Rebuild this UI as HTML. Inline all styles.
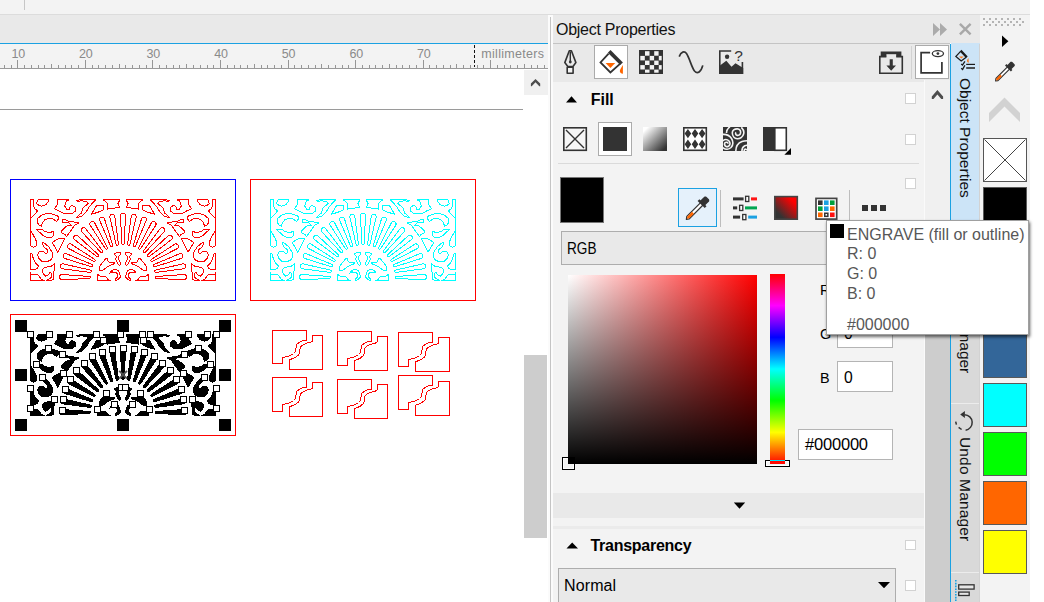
<!DOCTYPE html>
<html><head><meta charset="utf-8"><title>Object Properties</title>
<style>
html,body{margin:0;padding:0;background:#fff;}
body{width:1044px;height:602px;overflow:hidden;position:relative;font-family:"Liberation Sans",sans-serif;color:#000;}
.a{position:absolute;}
.t{position:absolute;white-space:nowrap;line-height:1;}
svg{position:absolute;left:0;top:0;overflow:visible;}
.cb{position:absolute;width:8.6px;height:8.6px;background:#fff;border:1px solid #d2d2d2;}
.inp{position:absolute;background:#fff;border:1px solid #b4b4b4;box-sizing:border-box;}
.sw{position:absolute;left:983px;width:44px;height:44px;box-sizing:border-box;border:1px solid #595959;}
</style></head><body>

<div class="a" style="left:0;top:0;width:1030px;height:14px;background:#f3f3f3;border-bottom:1px solid #dcdcdc"></div>
<div class="a" style="left:24px;top:0;width:1px;height:10px;background:#c6c6c6"></div>
<div class="a" style="left:0;top:15px;width:548px;height:28px;background:#e9e9e9"></div>
<div class="a" style="left:0;top:43px;width:548px;height:1px;background:#1ba1e2"></div>
<div class="a" style="left:0;top:44px;width:548px;height:24px;background:#f3f3f3"></div>
<div class="a" style="left:0;top:68px;width:548px;height:1px;background:#9a9a9a"></div>
<div class="a" style="left:0;top:109px;width:523px;height:1px;background:#9a9a9a"></div>
<div class="a" style="left:524px;top:70px;width:24px;height:25px;background:#f0f0f0"></div>
<div class="a" style="left:524px;top:355px;width:23px;height:183px;background:#cdcdcd"></div>
<div class="a" style="left:548px;top:15px;width:5px;height:587px;background:#fbfbfb"></div>
<div class="a" style="left:550px;top:17px;width:1px;height:585px;background:#c4c4c4"></div>
<div class="a" style="left:553px;top:15px;width:427px;height:28px;background:#e9e9e9"></div>
<div class="a" style="left:553px;top:43px;width:397px;height:1px;background:#c4c4c4"></div>
<div class="a" style="left:553px;top:44px;width:397px;height:39px;background:#e9e9e9"></div>
<div class="a" style="left:553px;top:82px;width:371px;height:520px;background:#f3f3f3"></div>
<div class="a" style="left:924px;top:80px;width:26px;height:522px;background:#f0f0f0;border-left:1px solid #fafafa;box-sizing:border-box"></div>
<div class="a" style="left:925px;top:222px;width:25px;height:380px;background:#cdcdcd"></div>
<div class="a" style="left:951px;top:44px;width:29px;height:558px;background:#d9d9d9"></div>
<div class="a" style="left:951px;top:43px;width:29px;height:181px;background:#cce4f7"></div>
<div class="a" style="left:950px;top:44px;width:1px;height:558px;background:#1ba1e2"></div>
<div class="a" style="left:951px;top:403px;width:28px;height:1px;background:#ececec"></div>
<div class="a" style="left:951px;top:572px;width:28px;height:1px;background:#ececec"></div>
<div class="a" style="left:979px;top:44px;width:1px;height:558px;background:#d2d2d2"></div>
<div class="a" style="left:980px;top:15px;width:50px;height:587px;background:#f3f3f3"></div>
<div class="t" style="left:11.4px;top:48px;font-size:12.5px;color:#8a8a8a;letter-spacing:-0.2px">10</div>
<div class="t" style="left:79.0px;top:48px;font-size:12.5px;color:#8a8a8a;letter-spacing:-0.2px">20</div>
<div class="t" style="left:146.6px;top:48px;font-size:12.5px;color:#8a8a8a;letter-spacing:-0.2px">30</div>
<div class="t" style="left:214.2px;top:48px;font-size:12.5px;color:#8a8a8a;letter-spacing:-0.2px">40</div>
<div class="t" style="left:281.8px;top:48px;font-size:12.5px;color:#8a8a8a;letter-spacing:-0.2px">50</div>
<div class="t" style="left:349.4px;top:48px;font-size:12.5px;color:#8a8a8a;letter-spacing:-0.2px">60</div>
<div class="t" style="left:417.0px;top:48px;font-size:12.5px;color:#8a8a8a;letter-spacing:-0.2px">70</div>
<div class="t" style="left:481.3px;top:48px;font-size:12.5px;letter-spacing:0.3px;color:#8a8a8a">millimeters</div>
<div class="t" id="ttl" style="left:556px;top:21.5px;font-size:16px;letter-spacing:-0.26px;color:#111">Object Properties</div>
<div class="t" id="fill" style="left:590.7px;top:92px;font-size:16px;font-weight:bold">Fill</div>
<div class="t" id="transp" style="left:590.5px;top:538.4px;font-size:16px;letter-spacing:-0.27px;font-weight:bold">Transparency</div>
<div class="inp" style="left:561px;top:231px;width:340px;height:34px;background:#e9e9e9;border-color:#adadad"></div>
<div class="t" id="rgb" style="left:567px;top:241px;font-size:16px;transform:scaleX(.85);transform-origin:0 0">RGB</div>
<div class="inp" style="left:837px;top:273px;width:56px;height:31px"></div>
<div class="t" style="left:820px;top:281.8px;font-size:15.5px;transform:scaleX(.93);transform-origin:0 0">R</div>
<div class="t" style="left:843.8px;top:281px;font-size:16.5px;transform:scaleX(.95);transform-origin:0 0">0</div>
<div class="inp" style="left:837px;top:317px;width:56px;height:31px"></div>
<div class="t" style="left:820px;top:325.8px;font-size:15.5px;transform:scaleX(.93);transform-origin:0 0">G</div>
<div class="t" style="left:843.8px;top:325px;font-size:16.5px;transform:scaleX(.95);transform-origin:0 0">0</div>
<div class="inp" style="left:837px;top:361px;width:56px;height:31px"></div>
<div class="t" style="left:820px;top:369.8px;font-size:15.5px;transform:scaleX(.93);transform-origin:0 0">B</div>
<div class="t" style="left:843.8px;top:369px;font-size:16.5px;transform:scaleX(.95);transform-origin:0 0">0</div>
<div class="inp" style="left:798px;top:429px;width:95px;height:31px"></div>
<div class="t" id="hex" style="left:805px;top:436.3px;font-size:16.5px;letter-spacing:-0.2px">#000000</div>
<div class="a" style="left:553px;top:493px;width:371px;height:25px;background:#e9e9e9"></div>
<div class="a" style="left:553px;top:526px;width:371px;height:3px;background:#ebebeb"></div>
<div class="inp" style="left:558px;top:568px;width:338px;height:40px;background:#e9e9e9;border-color:#adadad"></div>
<div class="t" id="normal" style="left:564px;top:578px;font-size:16px;letter-spacing:0.12px">Normal</div>
<div class="a" style="left:558px;top:163px;width:361px;height:1px;background:#dadada"></div>
<div class="a" style="left:911px;top:46px;width:1px;height:33px;background:#d2d2d2"></div>
<div class="a" style="left:720px;top:190px;width:1px;height:37px;background:#bdbdbd"></div>
<div class="a" style="left:849px;top:190px;width:1px;height:37px;background:#bdbdbd"></div>
<div class="cb" style="left:905.2px;top:93.2px"></div>
<div class="cb" style="left:905.2px;top:134.4px"></div>
<div class="cb" style="left:905.2px;top:178.4px"></div>
<div class="cb" style="left:905.2px;top:539.8px"></div>
<div class="cb" style="left:905.2px;top:580.2px"></div>
<div class="a" style="left:594px;top:45px;width:32px;height:32px;background:#fff;border:1px solid #ababab"></div>
<div class="a" style="left:915px;top:45px;width:32px;height:32px;background:#fff;border:1px solid #ababab"></div>
<div class="a" style="left:598px;top:122px;width:32px;height:32px;background:#fff;border:1px solid #ababab"></div>
<div class="a" style="left:678px;top:188px;width:37px;height:37px;background:#e5f1fb;border:1px solid #1ba1e2"></div>
<div class="a" style="left:560px;top:177px;width:42px;height:44px;background:#000;border:1px solid #777"></div>
<div class="a" style="left:568px;top:275px;width:189px;height:189px;background:linear-gradient(to bottom,rgba(0,0,0,0),#000),linear-gradient(to right,#fff,#f00)"></div>
<div class="a" style="left:770px;top:274px;width:15px;height:190px;background:linear-gradient(to bottom,#f00 0%,#f0f 16.67%,#00f 33.33%,#0ff 50%,#0f0 66.67%,#ff0 83.33%,#f00 100%)"></div>
<div class="a" style="left:562px;top:457px;width:11px;height:11px;border:1px solid #000;box-shadow:inset 0 0 0 1px #fff"></div>
<div class="a" style="left:765px;top:460px;width:23px;height:5px;border:1px solid #000;box-shadow:inset 0 0 0 1px #fff"></div>
<div class="a" style="left:770px;top:460px;width:15px;height:1px;background:#00e5ff"></div>
<div class="a" style="left:770px;top:461px;width:15px;height:3px;background:#ff0800"></div>
<div class="a" style="left:568px;top:458.4px;width:5.6px;height:5.6px;background:#000"></div>
<div class="t" id="vt1" style="left:972.5px;top:78px;font-size:15.5px;transform-origin:0 0;transform:rotate(90deg);color:#111">Object Properties</div>
<div class="t" id="vt2" style="left:972.5px;top:263px;font-size:15.5px;transform-origin:0 0;transform:rotate(90deg);color:#111">Object Manager</div>
<div class="t" id="vt3" style="left:972.5px;top:437px;font-size:15.5px;letter-spacing:0.15px;transform-origin:0 0;transform:rotate(90deg);color:#111">Undo Manager</div>
<div class="sw" style="top:138px;background:#fff;border-color:#555"></div>
<div class="sw" style="top:187px;background:#000"></div>
<div class="sw" style="top:236px;background:#f00"></div>
<div class="sw" style="top:285px;background:#00f"></div>
<div class="sw" style="top:334px;background:#336699"></div>
<div class="sw" style="top:383px;background:#00ffff"></div>
<div class="sw" style="top:432px;background:#00ff00"></div>
<div class="sw" style="top:481px;background:#ff6600"></div>
<div class="sw" style="top:530px;background:#ffff00"></div><svg width="1044" height="602" viewBox="0 0 1044 602">
<g shape-rendering="crispEdges" stroke="#969696" stroke-width="1" fill="none">
<path d="M4.5,65 V68 M11.5,65 V68 M17.5,60 V68 M24.5,65 V68 M31.5,65 V68 M38.5,65 V68 M44.5,65 V68 M51.5,64 V68 M58.5,65 V68 M65.5,65 V68 M71.5,65 V68 M78.5,65 V68 M85.5,60 V68 M92.5,65 V68 M98.5,65 V68 M105.5,65 V68 M112.5,65 V68 M119.5,64 V68 M125.5,65 V68 M132.5,65 V68 M139.5,65 V68 M146.5,65 V68 M152.5,60 V68 M159.5,65 V68 M166.5,65 V68 M173.5,65 V68 M179.5,65 V68 M186.5,64 V68 M193.5,65 V68 M200.5,65 V68 M207.5,65 V68 M213.5,65 V68 M220.5,60 V68 M227.5,65 V68 M234.5,65 V68 M240.5,65 V68 M247.5,65 V68 M254.5,64 V68 M261.5,65 V68 M267.5,65 V68 M274.5,65 V68 M281.5,65 V68 M288.5,60 V68 M294.5,65 V68 M301.5,65 V68 M308.5,65 V68 M315.5,65 V68 M321.5,64 V68 M328.5,65 V68 M335.5,65 V68 M342.5,65 V68 M348.5,65 V68 M355.5,60 V68 M362.5,65 V68 M369.5,65 V68 M375.5,65 V68 M382.5,65 V68 M389.5,64 V68 M396.5,65 V68 M402.5,65 V68 M409.5,65 V68 M416.5,65 V68 M423.5,60 V68 M429.5,65 V68 M436.5,65 V68 M443.5,65 V68 M450.5,65 V68 M456.5,64 V68 M463.5,65 V68 M470.5,65 V68 M477.5,65 V68 M483.5,65 V68 M490.5,60 V68 M497.5,65 V68 M504.5,65 V68 M510.5,65 V68 M517.5,65 V68 M524.5,64 V68 M531.5,65 V68 M537.5,65 V68 M544.5,65 V68"/>
</g>
<path d="M474.5,45 V67" stroke="#111" stroke-width="1" stroke-dasharray="3,2" shape-rendering="crispEdges"/>
<g shape-rendering="crispEdges" fill="none" stroke-width="1">
<rect x="10.5" y="179.5" width="225" height="121" stroke="#0000ff"/>
<rect x="250.5" y="179.5" width="225" height="121" stroke="#ff0000"/>
<rect x="10.5" y="314.5" width="225" height="121" stroke="#ff0000"/>
<g stroke="#ff0000"><path d="M30.5,199.5 33.1,199.5 33.2,205.0 34.7,208.7 37.6,211.0 34.0,215.0 30.7,218.5 30.7,230.4 33.0,234.5 35.5,239.3 36.6,242.0 36.6,245.5 33.2,247.3 30.5,245.5Z M48.8,199.5 48.2,201.6 46.2,204.2 44.6,205.6 41.2,206.2 38.6,205.2 36.8,203.6 37.3,200.9 38.6,199.5Z M68.7,199.5 68.7,200.2 66.5,200.9 64.6,205.7 66.9,209.8 69.0,209.8 69.5,207.2 72.1,205.3 75.5,207.2 75.8,210.6 72.8,213.2 63.9,213.3 59.4,211.0 54.2,208.7 56.8,205.7 57.9,203.5 57.9,199.5Z M48.2,213.3 53.4,214.3 57.9,216.2 58.6,218.4 56.8,221.4 52.7,218.8 48.9,218.3 45.2,219.5 42.6,222.2 41.5,226.3 39.2,225.5 37.3,222.2 37.7,218.4 42.2,214.7Z M36.2,229.3 42.2,229.3 44.4,231.1 48.2,232.6 51.2,232.2 51.9,231.1 53.8,231.1 53.8,234.9 51.9,237.1 45.9,237.1 42.2,234.9 39.2,231.9Z M62.4,219.5 64.6,219.2 69.9,221.8 78.2,222.2 78.6,223.3 74.3,225.5 72.1,228.9 66.5,236.4 65.4,234.9 61.3,232.6 61.3,231.1 66.9,225.9 71.3,225.5 68.4,222.5 62.4,222.5Z M95.8,199.5 89.4,206.5 86.8,210.9 82.0,216.2 76.4,217.7 78.2,215.8 81.2,213.2 83.1,208.0 87.2,204.2 88.3,203.1 86.5,201.2 80.5,200.9 78.2,201.6 76.0,200.1Z M102.9,205.3 103.6,207.2 103.3,209.8 98.4,212.1 91.3,214.3 93.6,210.6 95.4,207.2 96.9,205.3Z M119.7,199.5 119.7,200.5 117.8,203.1 119.0,205.7 119.7,207.6 114.9,208.0 108.9,208.3 107.4,209.8 107.2,203.5 105.1,201.2 103.3,200.1 104.4,199.5Z M30.5,253.3 32.1,254.1 33.6,259.7 36.2,263.8 38.5,266.0 37.0,268.6 34.7,269.8 30.5,269.4Z M42.2,242.1 44.1,242.9 48.9,247.0 51.9,251.8 52.7,256.7 50.4,260.4 45.9,261.8 41.8,261.2 39.2,258.9 37.3,254.8 39.2,251.8 42.9,251.1 44.8,252.9 46.7,253.3 47.8,251.5 46.7,248.8 44.1,247.3 42.6,244.4Z M63.1,238.0 64.6,239.1 61.6,244.7 57.9,252.2 56.8,250.3 52.3,242.5 58.6,238.4Z M54.2,264.2 53.8,278.7 51.9,280.2 46.3,280.2 49.7,278.7 51.5,276.9 51.2,273.1 50.0,272.4 48.2,275.0 45.6,276.1 43.3,273.9 42.2,270.9 43.3,268.3 45.9,267.1 50.4,266.8 53.0,264.9Z M30.5,273.1 31.4,274.2 33.2,275.0 34.7,274.5 37.7,274.5 41.5,279.5 44.8,280.5 30.5,280.5Z M106.3,258.2 107.8,259.3 108.1,261.2 109.6,262.3 114.1,262.3 114.1,263.8 111.9,264.5 108.1,266.4 105.1,268.6 101.8,270.5 99.5,270.1 99.2,267.5 101.4,263.8 103.6,261.2Z M120.8,252.2 120.5,254.1 118.6,256.7 118.6,259.7 120.1,261.9 120.1,264.9 119.0,265.3 116.7,261.9 115.6,259.3 116.3,256.7 115.2,255.2 114.5,253.7 117.8,252.2Z M114.5,269.4 117.8,270.1 119.7,272.8 120.1,276.1 120.5,277.2 117.8,279.9 115.6,280.2 115.6,279.1 117.5,276.9 117.5,273.9 116.0,272.4 112.6,272.0 110.4,272.8 111.5,270.5Z M97.3,274.2 98.4,275.0 100.3,276.1 105.5,276.1 107.8,279.5 109.6,280.5 97.3,280.5Z"/><path transform="translate(246,0) scale(-1,1)" d="M30.5,199.5 33.1,199.5 33.2,205.0 34.7,208.7 37.6,211.0 34.0,215.0 30.7,218.5 30.7,230.4 33.0,234.5 35.5,239.3 36.6,242.0 36.6,245.5 33.2,247.3 30.5,245.5Z M48.8,199.5 48.2,201.6 46.2,204.2 44.6,205.6 41.2,206.2 38.6,205.2 36.8,203.6 37.3,200.9 38.6,199.5Z M68.7,199.5 68.7,200.2 66.5,200.9 64.6,205.7 66.9,209.8 69.0,209.8 69.5,207.2 72.1,205.3 75.5,207.2 75.8,210.6 72.8,213.2 63.9,213.3 59.4,211.0 54.2,208.7 56.8,205.7 57.9,203.5 57.9,199.5Z M48.2,213.3 53.4,214.3 57.9,216.2 58.6,218.4 56.8,221.4 52.7,218.8 48.9,218.3 45.2,219.5 42.6,222.2 41.5,226.3 39.2,225.5 37.3,222.2 37.7,218.4 42.2,214.7Z M36.2,229.3 42.2,229.3 44.4,231.1 48.2,232.6 51.2,232.2 51.9,231.1 53.8,231.1 53.8,234.9 51.9,237.1 45.9,237.1 42.2,234.9 39.2,231.9Z M62.4,219.5 64.6,219.2 69.9,221.8 78.2,222.2 78.6,223.3 74.3,225.5 72.1,228.9 66.5,236.4 65.4,234.9 61.3,232.6 61.3,231.1 66.9,225.9 71.3,225.5 68.4,222.5 62.4,222.5Z M95.8,199.5 89.4,206.5 86.8,210.9 82.0,216.2 76.4,217.7 78.2,215.8 81.2,213.2 83.1,208.0 87.2,204.2 88.3,203.1 86.5,201.2 80.5,200.9 78.2,201.6 76.0,200.1Z M102.9,205.3 103.6,207.2 103.3,209.8 98.4,212.1 91.3,214.3 93.6,210.6 95.4,207.2 96.9,205.3Z M119.7,199.5 119.7,200.5 117.8,203.1 119.0,205.7 119.7,207.6 114.9,208.0 108.9,208.3 107.4,209.8 107.2,203.5 105.1,201.2 103.3,200.1 104.4,199.5Z M30.5,253.3 32.1,254.1 33.6,259.7 36.2,263.8 38.5,266.0 37.0,268.6 34.7,269.8 30.5,269.4Z M42.2,242.1 44.1,242.9 48.9,247.0 51.9,251.8 52.7,256.7 50.4,260.4 45.9,261.8 41.8,261.2 39.2,258.9 37.3,254.8 39.2,251.8 42.9,251.1 44.8,252.9 46.7,253.3 47.8,251.5 46.7,248.8 44.1,247.3 42.6,244.4Z M63.1,238.0 64.6,239.1 61.6,244.7 57.9,252.2 56.8,250.3 52.3,242.5 58.6,238.4Z M54.2,264.2 53.8,278.7 51.9,280.2 46.3,280.2 49.7,278.7 51.5,276.9 51.2,273.1 50.0,272.4 48.2,275.0 45.6,276.1 43.3,273.9 42.2,270.9 43.3,268.3 45.9,267.1 50.4,266.8 53.0,264.9Z M30.5,273.1 31.4,274.2 33.2,275.0 34.7,274.5 37.7,274.5 41.5,279.5 44.8,280.5 30.5,280.5Z M106.3,258.2 107.8,259.3 108.1,261.2 109.6,262.3 114.1,262.3 114.1,263.8 111.9,264.5 108.1,266.4 105.1,268.6 101.8,270.5 99.5,270.1 99.2,267.5 101.4,263.8 103.6,261.2Z M120.8,252.2 120.5,254.1 118.6,256.7 118.6,259.7 120.1,261.9 120.1,264.9 119.0,265.3 116.7,261.9 115.6,259.3 116.3,256.7 115.2,255.2 114.5,253.7 117.8,252.2Z M114.5,269.4 117.8,270.1 119.7,272.8 120.1,276.1 120.5,277.2 117.8,279.9 115.6,280.2 115.6,279.1 117.5,276.9 117.5,273.9 116.0,272.4 112.6,272.0 110.4,272.8 111.5,270.5Z M97.3,274.2 98.4,275.0 100.3,276.1 105.5,276.1 107.8,279.5 109.6,280.5 97.3,280.5Z"/><path d="M61.8,274.5 60.4,275.0 59.6,276.0 59.4,277.0 59.7,278.4 60.8,279.3 62.0,279.5 72.0,279.4 90.0,278.3 90.8,277.4 90.0,276.5Z M63.2,263.9 62.2,263.9 61.3,264.3 60.6,265.0 60.3,265.9 60.3,266.9 60.7,267.8 61.4,268.5 62.3,268.8 90.2,272.4 91.1,271.8 91.3,270.9 90.6,270.1Z M66.3,253.7 65.4,253.6 64.4,253.8 63.6,254.4 63.1,255.2 63.0,256.2 63.2,257.1 63.8,257.9 64.6,258.4 91.5,266.8 92.5,266.4 92.8,265.5 92.3,264.6Z M71.2,244.2 70.3,243.9 69.4,244.0 68.5,244.4 67.8,245.2 67.5,246.1 67.6,247.0 68.0,247.9 68.7,248.6 93.8,261.4 94.8,261.2 95.3,260.5 94.9,259.5Z M77.7,235.7 76.9,235.3 75.9,235.2 75.0,235.4 74.2,236.1 73.7,236.9 73.6,237.9 73.9,238.8 74.5,239.6 96.9,256.6 98.0,256.6 98.6,255.9 98.4,254.8Z M85.6,228.5 84.8,227.9 83.9,227.6 82.9,227.7 82.1,228.2 81.4,229.0 81.2,229.9 81.3,230.9 81.7,231.7 100.8,252.4 101.9,252.6 102.6,252.0 102.6,250.9Z M94.6,222.7 93.9,222.0 93.0,221.6 92.1,221.5 91.1,221.8 90.4,222.5 90.0,223.4 89.9,224.3 90.2,225.2 105.5,248.9 106.5,249.3 107.2,248.8 107.4,247.8Z M104.4,218.6 103.9,217.8 103.1,217.2 102.2,217.0 101.2,217.1 100.4,217.6 99.8,218.4 99.6,219.4 99.7,220.3 110.6,246.3 111.5,246.8 112.4,246.5 112.8,245.5Z M114.8,216.3 114.5,215.4 113.8,214.7 112.9,214.3 111.9,214.3 111.0,214.6 110.3,215.3 109.9,216.2 109.9,217.2 116.1,244.6 116.9,245.3 117.8,245.1 118.4,244.2Z M125.5,215.8 125.3,214.8 124.8,214.0 124.0,213.5 123.0,213.3 122.0,213.5 121.2,214.0 120.7,214.8 120.5,215.8 121.8,243.9 122.5,244.7 123.5,244.7 124.2,243.9Z M136.1,217.2 136.1,216.2 135.7,215.3 135.0,214.6 134.1,214.3 133.1,214.3 132.2,214.7 131.5,215.4 131.2,216.3 127.6,244.2 128.2,245.1 129.1,245.3 129.9,244.6Z M146.3,220.3 146.4,219.4 146.2,218.4 145.6,217.6 144.8,217.1 143.8,217.0 142.9,217.2 142.1,217.8 141.6,218.6 133.2,245.5 133.6,246.5 134.5,246.8 135.4,246.3Z M155.8,225.2 156.1,224.3 156.0,223.4 155.6,222.5 154.8,221.8 153.9,221.5 153.0,221.6 152.1,222.0 151.4,222.7 138.6,247.8 138.8,248.8 139.5,249.3 140.5,248.9Z M164.3,231.7 164.7,230.9 164.8,229.9 164.6,229.0 163.9,228.2 163.1,227.7 162.1,227.6 161.2,227.9 160.4,228.5 143.4,250.9 143.4,252.0 144.1,252.6 145.2,252.4Z M171.5,239.6 172.1,238.8 172.4,237.9 172.3,236.9 171.8,236.1 171.0,235.4 170.1,235.2 169.1,235.3 168.3,235.7 147.6,254.8 147.4,255.9 148.0,256.6 149.1,256.6Z M177.3,248.6 178.0,247.9 178.4,247.0 178.5,246.1 178.2,245.2 177.5,244.4 176.6,244.0 175.7,243.9 174.8,244.2 151.1,259.5 150.7,260.5 151.2,261.2 152.2,261.4Z M181.4,258.4 182.2,257.9 182.8,257.1 183.0,256.2 182.9,255.2 182.4,254.4 181.6,253.8 180.6,253.6 179.7,253.7 153.7,264.6 153.2,265.5 153.5,266.4 154.5,266.8Z M183.7,268.8 184.6,268.5 185.3,267.8 185.7,266.9 185.7,265.9 185.4,265.0 184.7,264.3 183.8,263.9 182.8,263.9 155.4,270.1 154.7,270.9 154.9,271.8 155.8,272.4Z M184.2,274.5 185.6,275.0 186.4,276.0 186.6,277.0 186.3,278.4 185.2,279.3 184.0,279.5 174.0,279.4 156.0,278.3 155.2,277.4 156.0,276.5Z"/></g>
<g stroke="#00ffff" transform="translate(240,0)"><path d="M30.5,199.5 33.1,199.5 33.2,205.0 34.7,208.7 37.6,211.0 34.0,215.0 30.7,218.5 30.7,230.4 33.0,234.5 35.5,239.3 36.6,242.0 36.6,245.5 33.2,247.3 30.5,245.5Z M48.8,199.5 48.2,201.6 46.2,204.2 44.6,205.6 41.2,206.2 38.6,205.2 36.8,203.6 37.3,200.9 38.6,199.5Z M68.7,199.5 68.7,200.2 66.5,200.9 64.6,205.7 66.9,209.8 69.0,209.8 69.5,207.2 72.1,205.3 75.5,207.2 75.8,210.6 72.8,213.2 63.9,213.3 59.4,211.0 54.2,208.7 56.8,205.7 57.9,203.5 57.9,199.5Z M48.2,213.3 53.4,214.3 57.9,216.2 58.6,218.4 56.8,221.4 52.7,218.8 48.9,218.3 45.2,219.5 42.6,222.2 41.5,226.3 39.2,225.5 37.3,222.2 37.7,218.4 42.2,214.7Z M36.2,229.3 42.2,229.3 44.4,231.1 48.2,232.6 51.2,232.2 51.9,231.1 53.8,231.1 53.8,234.9 51.9,237.1 45.9,237.1 42.2,234.9 39.2,231.9Z M62.4,219.5 64.6,219.2 69.9,221.8 78.2,222.2 78.6,223.3 74.3,225.5 72.1,228.9 66.5,236.4 65.4,234.9 61.3,232.6 61.3,231.1 66.9,225.9 71.3,225.5 68.4,222.5 62.4,222.5Z M95.8,199.5 89.4,206.5 86.8,210.9 82.0,216.2 76.4,217.7 78.2,215.8 81.2,213.2 83.1,208.0 87.2,204.2 88.3,203.1 86.5,201.2 80.5,200.9 78.2,201.6 76.0,200.1Z M102.9,205.3 103.6,207.2 103.3,209.8 98.4,212.1 91.3,214.3 93.6,210.6 95.4,207.2 96.9,205.3Z M119.7,199.5 119.7,200.5 117.8,203.1 119.0,205.7 119.7,207.6 114.9,208.0 108.9,208.3 107.4,209.8 107.2,203.5 105.1,201.2 103.3,200.1 104.4,199.5Z M30.5,253.3 32.1,254.1 33.6,259.7 36.2,263.8 38.5,266.0 37.0,268.6 34.7,269.8 30.5,269.4Z M42.2,242.1 44.1,242.9 48.9,247.0 51.9,251.8 52.7,256.7 50.4,260.4 45.9,261.8 41.8,261.2 39.2,258.9 37.3,254.8 39.2,251.8 42.9,251.1 44.8,252.9 46.7,253.3 47.8,251.5 46.7,248.8 44.1,247.3 42.6,244.4Z M63.1,238.0 64.6,239.1 61.6,244.7 57.9,252.2 56.8,250.3 52.3,242.5 58.6,238.4Z M54.2,264.2 53.8,278.7 51.9,280.2 46.3,280.2 49.7,278.7 51.5,276.9 51.2,273.1 50.0,272.4 48.2,275.0 45.6,276.1 43.3,273.9 42.2,270.9 43.3,268.3 45.9,267.1 50.4,266.8 53.0,264.9Z M30.5,273.1 31.4,274.2 33.2,275.0 34.7,274.5 37.7,274.5 41.5,279.5 44.8,280.5 30.5,280.5Z M106.3,258.2 107.8,259.3 108.1,261.2 109.6,262.3 114.1,262.3 114.1,263.8 111.9,264.5 108.1,266.4 105.1,268.6 101.8,270.5 99.5,270.1 99.2,267.5 101.4,263.8 103.6,261.2Z M120.8,252.2 120.5,254.1 118.6,256.7 118.6,259.7 120.1,261.9 120.1,264.9 119.0,265.3 116.7,261.9 115.6,259.3 116.3,256.7 115.2,255.2 114.5,253.7 117.8,252.2Z M114.5,269.4 117.8,270.1 119.7,272.8 120.1,276.1 120.5,277.2 117.8,279.9 115.6,280.2 115.6,279.1 117.5,276.9 117.5,273.9 116.0,272.4 112.6,272.0 110.4,272.8 111.5,270.5Z M97.3,274.2 98.4,275.0 100.3,276.1 105.5,276.1 107.8,279.5 109.6,280.5 97.3,280.5Z"/><path transform="translate(246,0) scale(-1,1)" d="M30.5,199.5 33.1,199.5 33.2,205.0 34.7,208.7 37.6,211.0 34.0,215.0 30.7,218.5 30.7,230.4 33.0,234.5 35.5,239.3 36.6,242.0 36.6,245.5 33.2,247.3 30.5,245.5Z M48.8,199.5 48.2,201.6 46.2,204.2 44.6,205.6 41.2,206.2 38.6,205.2 36.8,203.6 37.3,200.9 38.6,199.5Z M68.7,199.5 68.7,200.2 66.5,200.9 64.6,205.7 66.9,209.8 69.0,209.8 69.5,207.2 72.1,205.3 75.5,207.2 75.8,210.6 72.8,213.2 63.9,213.3 59.4,211.0 54.2,208.7 56.8,205.7 57.9,203.5 57.9,199.5Z M48.2,213.3 53.4,214.3 57.9,216.2 58.6,218.4 56.8,221.4 52.7,218.8 48.9,218.3 45.2,219.5 42.6,222.2 41.5,226.3 39.2,225.5 37.3,222.2 37.7,218.4 42.2,214.7Z M36.2,229.3 42.2,229.3 44.4,231.1 48.2,232.6 51.2,232.2 51.9,231.1 53.8,231.1 53.8,234.9 51.9,237.1 45.9,237.1 42.2,234.9 39.2,231.9Z M62.4,219.5 64.6,219.2 69.9,221.8 78.2,222.2 78.6,223.3 74.3,225.5 72.1,228.9 66.5,236.4 65.4,234.9 61.3,232.6 61.3,231.1 66.9,225.9 71.3,225.5 68.4,222.5 62.4,222.5Z M95.8,199.5 89.4,206.5 86.8,210.9 82.0,216.2 76.4,217.7 78.2,215.8 81.2,213.2 83.1,208.0 87.2,204.2 88.3,203.1 86.5,201.2 80.5,200.9 78.2,201.6 76.0,200.1Z M102.9,205.3 103.6,207.2 103.3,209.8 98.4,212.1 91.3,214.3 93.6,210.6 95.4,207.2 96.9,205.3Z M119.7,199.5 119.7,200.5 117.8,203.1 119.0,205.7 119.7,207.6 114.9,208.0 108.9,208.3 107.4,209.8 107.2,203.5 105.1,201.2 103.3,200.1 104.4,199.5Z M30.5,253.3 32.1,254.1 33.6,259.7 36.2,263.8 38.5,266.0 37.0,268.6 34.7,269.8 30.5,269.4Z M42.2,242.1 44.1,242.9 48.9,247.0 51.9,251.8 52.7,256.7 50.4,260.4 45.9,261.8 41.8,261.2 39.2,258.9 37.3,254.8 39.2,251.8 42.9,251.1 44.8,252.9 46.7,253.3 47.8,251.5 46.7,248.8 44.1,247.3 42.6,244.4Z M63.1,238.0 64.6,239.1 61.6,244.7 57.9,252.2 56.8,250.3 52.3,242.5 58.6,238.4Z M54.2,264.2 53.8,278.7 51.9,280.2 46.3,280.2 49.7,278.7 51.5,276.9 51.2,273.1 50.0,272.4 48.2,275.0 45.6,276.1 43.3,273.9 42.2,270.9 43.3,268.3 45.9,267.1 50.4,266.8 53.0,264.9Z M30.5,273.1 31.4,274.2 33.2,275.0 34.7,274.5 37.7,274.5 41.5,279.5 44.8,280.5 30.5,280.5Z M106.3,258.2 107.8,259.3 108.1,261.2 109.6,262.3 114.1,262.3 114.1,263.8 111.9,264.5 108.1,266.4 105.1,268.6 101.8,270.5 99.5,270.1 99.2,267.5 101.4,263.8 103.6,261.2Z M120.8,252.2 120.5,254.1 118.6,256.7 118.6,259.7 120.1,261.9 120.1,264.9 119.0,265.3 116.7,261.9 115.6,259.3 116.3,256.7 115.2,255.2 114.5,253.7 117.8,252.2Z M114.5,269.4 117.8,270.1 119.7,272.8 120.1,276.1 120.5,277.2 117.8,279.9 115.6,280.2 115.6,279.1 117.5,276.9 117.5,273.9 116.0,272.4 112.6,272.0 110.4,272.8 111.5,270.5Z M97.3,274.2 98.4,275.0 100.3,276.1 105.5,276.1 107.8,279.5 109.6,280.5 97.3,280.5Z"/><path d="M61.8,274.5 60.4,275.0 59.6,276.0 59.4,277.0 59.7,278.4 60.8,279.3 62.0,279.5 72.0,279.4 90.0,278.3 90.8,277.4 90.0,276.5Z M63.2,263.9 62.2,263.9 61.3,264.3 60.6,265.0 60.3,265.9 60.3,266.9 60.7,267.8 61.4,268.5 62.3,268.8 90.2,272.4 91.1,271.8 91.3,270.9 90.6,270.1Z M66.3,253.7 65.4,253.6 64.4,253.8 63.6,254.4 63.1,255.2 63.0,256.2 63.2,257.1 63.8,257.9 64.6,258.4 91.5,266.8 92.5,266.4 92.8,265.5 92.3,264.6Z M71.2,244.2 70.3,243.9 69.4,244.0 68.5,244.4 67.8,245.2 67.5,246.1 67.6,247.0 68.0,247.9 68.7,248.6 93.8,261.4 94.8,261.2 95.3,260.5 94.9,259.5Z M77.7,235.7 76.9,235.3 75.9,235.2 75.0,235.4 74.2,236.1 73.7,236.9 73.6,237.9 73.9,238.8 74.5,239.6 96.9,256.6 98.0,256.6 98.6,255.9 98.4,254.8Z M85.6,228.5 84.8,227.9 83.9,227.6 82.9,227.7 82.1,228.2 81.4,229.0 81.2,229.9 81.3,230.9 81.7,231.7 100.8,252.4 101.9,252.6 102.6,252.0 102.6,250.9Z M94.6,222.7 93.9,222.0 93.0,221.6 92.1,221.5 91.1,221.8 90.4,222.5 90.0,223.4 89.9,224.3 90.2,225.2 105.5,248.9 106.5,249.3 107.2,248.8 107.4,247.8Z M104.4,218.6 103.9,217.8 103.1,217.2 102.2,217.0 101.2,217.1 100.4,217.6 99.8,218.4 99.6,219.4 99.7,220.3 110.6,246.3 111.5,246.8 112.4,246.5 112.8,245.5Z M114.8,216.3 114.5,215.4 113.8,214.7 112.9,214.3 111.9,214.3 111.0,214.6 110.3,215.3 109.9,216.2 109.9,217.2 116.1,244.6 116.9,245.3 117.8,245.1 118.4,244.2Z M125.5,215.8 125.3,214.8 124.8,214.0 124.0,213.5 123.0,213.3 122.0,213.5 121.2,214.0 120.7,214.8 120.5,215.8 121.8,243.9 122.5,244.7 123.5,244.7 124.2,243.9Z M136.1,217.2 136.1,216.2 135.7,215.3 135.0,214.6 134.1,214.3 133.1,214.3 132.2,214.7 131.5,215.4 131.2,216.3 127.6,244.2 128.2,245.1 129.1,245.3 129.9,244.6Z M146.3,220.3 146.4,219.4 146.2,218.4 145.6,217.6 144.8,217.1 143.8,217.0 142.9,217.2 142.1,217.8 141.6,218.6 133.2,245.5 133.6,246.5 134.5,246.8 135.4,246.3Z M155.8,225.2 156.1,224.3 156.0,223.4 155.6,222.5 154.8,221.8 153.9,221.5 153.0,221.6 152.1,222.0 151.4,222.7 138.6,247.8 138.8,248.8 139.5,249.3 140.5,248.9Z M164.3,231.7 164.7,230.9 164.8,229.9 164.6,229.0 163.9,228.2 163.1,227.7 162.1,227.6 161.2,227.9 160.4,228.5 143.4,250.9 143.4,252.0 144.1,252.6 145.2,252.4Z M171.5,239.6 172.1,238.8 172.4,237.9 172.3,236.9 171.8,236.1 171.0,235.4 170.1,235.2 169.1,235.3 168.3,235.7 147.6,254.8 147.4,255.9 148.0,256.6 149.1,256.6Z M177.3,248.6 178.0,247.9 178.4,247.0 178.5,246.1 178.2,245.2 177.5,244.4 176.6,244.0 175.7,243.9 174.8,244.2 151.1,259.5 150.7,260.5 151.2,261.2 152.2,261.4Z M181.4,258.4 182.2,257.9 182.8,257.1 183.0,256.2 182.9,255.2 182.4,254.4 181.6,253.8 180.6,253.6 179.7,253.7 153.7,264.6 153.2,265.5 153.5,266.4 154.5,266.8Z M183.7,268.8 184.6,268.5 185.3,267.8 185.7,266.9 185.7,265.9 185.4,265.0 184.7,264.3 183.8,263.9 182.8,263.9 155.4,270.1 154.7,270.9 154.9,271.8 155.8,272.4Z M184.2,274.5 185.6,275.0 186.4,276.0 186.6,277.0 186.3,278.4 185.2,279.3 184.0,279.5 174.0,279.4 156.0,278.3 155.2,277.4 156.0,276.5Z"/></g>
<g stroke="#000" fill="#000" transform="translate(0,135)"><path d="M30.5,199.5 33.1,199.5 33.2,205.0 34.7,208.7 37.6,211.0 34.0,215.0 30.7,218.5 30.7,230.4 33.0,234.5 35.5,239.3 36.6,242.0 36.6,245.5 33.2,247.3 30.5,245.5Z M48.8,199.5 48.2,201.6 46.2,204.2 44.6,205.6 41.2,206.2 38.6,205.2 36.8,203.6 37.3,200.9 38.6,199.5Z M68.7,199.5 68.7,200.2 66.5,200.9 64.6,205.7 66.9,209.8 69.0,209.8 69.5,207.2 72.1,205.3 75.5,207.2 75.8,210.6 72.8,213.2 63.9,213.3 59.4,211.0 54.2,208.7 56.8,205.7 57.9,203.5 57.9,199.5Z M48.2,213.3 53.4,214.3 57.9,216.2 58.6,218.4 56.8,221.4 52.7,218.8 48.9,218.3 45.2,219.5 42.6,222.2 41.5,226.3 39.2,225.5 37.3,222.2 37.7,218.4 42.2,214.7Z M36.2,229.3 42.2,229.3 44.4,231.1 48.2,232.6 51.2,232.2 51.9,231.1 53.8,231.1 53.8,234.9 51.9,237.1 45.9,237.1 42.2,234.9 39.2,231.9Z M62.4,219.5 64.6,219.2 69.9,221.8 78.2,222.2 78.6,223.3 74.3,225.5 72.1,228.9 66.5,236.4 65.4,234.9 61.3,232.6 61.3,231.1 66.9,225.9 71.3,225.5 68.4,222.5 62.4,222.5Z M95.8,199.5 89.4,206.5 86.8,210.9 82.0,216.2 76.4,217.7 78.2,215.8 81.2,213.2 83.1,208.0 87.2,204.2 88.3,203.1 86.5,201.2 80.5,200.9 78.2,201.6 76.0,200.1Z M102.9,205.3 103.6,207.2 103.3,209.8 98.4,212.1 91.3,214.3 93.6,210.6 95.4,207.2 96.9,205.3Z M119.7,199.5 119.7,200.5 117.8,203.1 119.0,205.7 119.7,207.6 114.9,208.0 108.9,208.3 107.4,209.8 107.2,203.5 105.1,201.2 103.3,200.1 104.4,199.5Z M30.5,253.3 32.1,254.1 33.6,259.7 36.2,263.8 38.5,266.0 37.0,268.6 34.7,269.8 30.5,269.4Z M42.2,242.1 44.1,242.9 48.9,247.0 51.9,251.8 52.7,256.7 50.4,260.4 45.9,261.8 41.8,261.2 39.2,258.9 37.3,254.8 39.2,251.8 42.9,251.1 44.8,252.9 46.7,253.3 47.8,251.5 46.7,248.8 44.1,247.3 42.6,244.4Z M63.1,238.0 64.6,239.1 61.6,244.7 57.9,252.2 56.8,250.3 52.3,242.5 58.6,238.4Z M54.2,264.2 53.8,278.7 51.9,280.2 46.3,280.2 49.7,278.7 51.5,276.9 51.2,273.1 50.0,272.4 48.2,275.0 45.6,276.1 43.3,273.9 42.2,270.9 43.3,268.3 45.9,267.1 50.4,266.8 53.0,264.9Z M30.5,273.1 31.4,274.2 33.2,275.0 34.7,274.5 37.7,274.5 41.5,279.5 44.8,280.5 30.5,280.5Z M106.3,258.2 107.8,259.3 108.1,261.2 109.6,262.3 114.1,262.3 114.1,263.8 111.9,264.5 108.1,266.4 105.1,268.6 101.8,270.5 99.5,270.1 99.2,267.5 101.4,263.8 103.6,261.2Z M120.8,252.2 120.5,254.1 118.6,256.7 118.6,259.7 120.1,261.9 120.1,264.9 119.0,265.3 116.7,261.9 115.6,259.3 116.3,256.7 115.2,255.2 114.5,253.7 117.8,252.2Z M114.5,269.4 117.8,270.1 119.7,272.8 120.1,276.1 120.5,277.2 117.8,279.9 115.6,280.2 115.6,279.1 117.5,276.9 117.5,273.9 116.0,272.4 112.6,272.0 110.4,272.8 111.5,270.5Z M97.3,274.2 98.4,275.0 100.3,276.1 105.5,276.1 107.8,279.5 109.6,280.5 97.3,280.5Z"/><path transform="translate(246,0) scale(-1,1)" d="M30.5,199.5 33.1,199.5 33.2,205.0 34.7,208.7 37.6,211.0 34.0,215.0 30.7,218.5 30.7,230.4 33.0,234.5 35.5,239.3 36.6,242.0 36.6,245.5 33.2,247.3 30.5,245.5Z M48.8,199.5 48.2,201.6 46.2,204.2 44.6,205.6 41.2,206.2 38.6,205.2 36.8,203.6 37.3,200.9 38.6,199.5Z M68.7,199.5 68.7,200.2 66.5,200.9 64.6,205.7 66.9,209.8 69.0,209.8 69.5,207.2 72.1,205.3 75.5,207.2 75.8,210.6 72.8,213.2 63.9,213.3 59.4,211.0 54.2,208.7 56.8,205.7 57.9,203.5 57.9,199.5Z M48.2,213.3 53.4,214.3 57.9,216.2 58.6,218.4 56.8,221.4 52.7,218.8 48.9,218.3 45.2,219.5 42.6,222.2 41.5,226.3 39.2,225.5 37.3,222.2 37.7,218.4 42.2,214.7Z M36.2,229.3 42.2,229.3 44.4,231.1 48.2,232.6 51.2,232.2 51.9,231.1 53.8,231.1 53.8,234.9 51.9,237.1 45.9,237.1 42.2,234.9 39.2,231.9Z M62.4,219.5 64.6,219.2 69.9,221.8 78.2,222.2 78.6,223.3 74.3,225.5 72.1,228.9 66.5,236.4 65.4,234.9 61.3,232.6 61.3,231.1 66.9,225.9 71.3,225.5 68.4,222.5 62.4,222.5Z M95.8,199.5 89.4,206.5 86.8,210.9 82.0,216.2 76.4,217.7 78.2,215.8 81.2,213.2 83.1,208.0 87.2,204.2 88.3,203.1 86.5,201.2 80.5,200.9 78.2,201.6 76.0,200.1Z M102.9,205.3 103.6,207.2 103.3,209.8 98.4,212.1 91.3,214.3 93.6,210.6 95.4,207.2 96.9,205.3Z M119.7,199.5 119.7,200.5 117.8,203.1 119.0,205.7 119.7,207.6 114.9,208.0 108.9,208.3 107.4,209.8 107.2,203.5 105.1,201.2 103.3,200.1 104.4,199.5Z M30.5,253.3 32.1,254.1 33.6,259.7 36.2,263.8 38.5,266.0 37.0,268.6 34.7,269.8 30.5,269.4Z M42.2,242.1 44.1,242.9 48.9,247.0 51.9,251.8 52.7,256.7 50.4,260.4 45.9,261.8 41.8,261.2 39.2,258.9 37.3,254.8 39.2,251.8 42.9,251.1 44.8,252.9 46.7,253.3 47.8,251.5 46.7,248.8 44.1,247.3 42.6,244.4Z M63.1,238.0 64.6,239.1 61.6,244.7 57.9,252.2 56.8,250.3 52.3,242.5 58.6,238.4Z M54.2,264.2 53.8,278.7 51.9,280.2 46.3,280.2 49.7,278.7 51.5,276.9 51.2,273.1 50.0,272.4 48.2,275.0 45.6,276.1 43.3,273.9 42.2,270.9 43.3,268.3 45.9,267.1 50.4,266.8 53.0,264.9Z M30.5,273.1 31.4,274.2 33.2,275.0 34.7,274.5 37.7,274.5 41.5,279.5 44.8,280.5 30.5,280.5Z M106.3,258.2 107.8,259.3 108.1,261.2 109.6,262.3 114.1,262.3 114.1,263.8 111.9,264.5 108.1,266.4 105.1,268.6 101.8,270.5 99.5,270.1 99.2,267.5 101.4,263.8 103.6,261.2Z M120.8,252.2 120.5,254.1 118.6,256.7 118.6,259.7 120.1,261.9 120.1,264.9 119.0,265.3 116.7,261.9 115.6,259.3 116.3,256.7 115.2,255.2 114.5,253.7 117.8,252.2Z M114.5,269.4 117.8,270.1 119.7,272.8 120.1,276.1 120.5,277.2 117.8,279.9 115.6,280.2 115.6,279.1 117.5,276.9 117.5,273.9 116.0,272.4 112.6,272.0 110.4,272.8 111.5,270.5Z M97.3,274.2 98.4,275.0 100.3,276.1 105.5,276.1 107.8,279.5 109.6,280.5 97.3,280.5Z"/><path d="M61.8,274.5 60.4,275.0 59.6,276.0 59.4,277.0 59.7,278.4 60.8,279.3 62.0,279.5 72.0,279.4 90.0,278.3 90.8,277.4 90.0,276.5Z M63.2,263.9 62.2,263.9 61.3,264.3 60.6,265.0 60.3,265.9 60.3,266.9 60.7,267.8 61.4,268.5 62.3,268.8 90.2,272.4 91.1,271.8 91.3,270.9 90.6,270.1Z M66.3,253.7 65.4,253.6 64.4,253.8 63.6,254.4 63.1,255.2 63.0,256.2 63.2,257.1 63.8,257.9 64.6,258.4 91.5,266.8 92.5,266.4 92.8,265.5 92.3,264.6Z M71.2,244.2 70.3,243.9 69.4,244.0 68.5,244.4 67.8,245.2 67.5,246.1 67.6,247.0 68.0,247.9 68.7,248.6 93.8,261.4 94.8,261.2 95.3,260.5 94.9,259.5Z M77.7,235.7 76.9,235.3 75.9,235.2 75.0,235.4 74.2,236.1 73.7,236.9 73.6,237.9 73.9,238.8 74.5,239.6 96.9,256.6 98.0,256.6 98.6,255.9 98.4,254.8Z M85.6,228.5 84.8,227.9 83.9,227.6 82.9,227.7 82.1,228.2 81.4,229.0 81.2,229.9 81.3,230.9 81.7,231.7 100.8,252.4 101.9,252.6 102.6,252.0 102.6,250.9Z M94.6,222.7 93.9,222.0 93.0,221.6 92.1,221.5 91.1,221.8 90.4,222.5 90.0,223.4 89.9,224.3 90.2,225.2 105.5,248.9 106.5,249.3 107.2,248.8 107.4,247.8Z M104.4,218.6 103.9,217.8 103.1,217.2 102.2,217.0 101.2,217.1 100.4,217.6 99.8,218.4 99.6,219.4 99.7,220.3 110.6,246.3 111.5,246.8 112.4,246.5 112.8,245.5Z M114.8,216.3 114.5,215.4 113.8,214.7 112.9,214.3 111.9,214.3 111.0,214.6 110.3,215.3 109.9,216.2 109.9,217.2 116.1,244.6 116.9,245.3 117.8,245.1 118.4,244.2Z M125.5,215.8 125.3,214.8 124.8,214.0 124.0,213.5 123.0,213.3 122.0,213.5 121.2,214.0 120.7,214.8 120.5,215.8 121.8,243.9 122.5,244.7 123.5,244.7 124.2,243.9Z M136.1,217.2 136.1,216.2 135.7,215.3 135.0,214.6 134.1,214.3 133.1,214.3 132.2,214.7 131.5,215.4 131.2,216.3 127.6,244.2 128.2,245.1 129.1,245.3 129.9,244.6Z M146.3,220.3 146.4,219.4 146.2,218.4 145.6,217.6 144.8,217.1 143.8,217.0 142.9,217.2 142.1,217.8 141.6,218.6 133.2,245.5 133.6,246.5 134.5,246.8 135.4,246.3Z M155.8,225.2 156.1,224.3 156.0,223.4 155.6,222.5 154.8,221.8 153.9,221.5 153.0,221.6 152.1,222.0 151.4,222.7 138.6,247.8 138.8,248.8 139.5,249.3 140.5,248.9Z M164.3,231.7 164.7,230.9 164.8,229.9 164.6,229.0 163.9,228.2 163.1,227.7 162.1,227.6 161.2,227.9 160.4,228.5 143.4,250.9 143.4,252.0 144.1,252.6 145.2,252.4Z M171.5,239.6 172.1,238.8 172.4,237.9 172.3,236.9 171.8,236.1 171.0,235.4 170.1,235.2 169.1,235.3 168.3,235.7 147.6,254.8 147.4,255.9 148.0,256.6 149.1,256.6Z M177.3,248.6 178.0,247.9 178.4,247.0 178.5,246.1 178.2,245.2 177.5,244.4 176.6,244.0 175.7,243.9 174.8,244.2 151.1,259.5 150.7,260.5 151.2,261.2 152.2,261.4Z M181.4,258.4 182.2,257.9 182.8,257.1 183.0,256.2 182.9,255.2 182.4,254.4 181.6,253.8 180.6,253.6 179.7,253.7 153.7,264.6 153.2,265.5 153.5,266.4 154.5,266.8Z M183.7,268.8 184.6,268.5 185.3,267.8 185.7,266.9 185.7,265.9 185.4,265.0 184.7,264.3 183.8,263.9 182.8,263.9 155.4,270.1 154.7,270.9 154.9,271.8 155.8,272.4Z M184.2,274.5 185.6,275.0 186.4,276.0 186.6,277.0 186.3,278.4 185.2,279.3 184.0,279.5 174.0,279.4 156.0,278.3 155.2,277.4 156.0,276.5Z"/></g>
<path d="M306.5,330.5 306.5,340.4 302.3,340.8 300.3,341.6 297.1,344.0 296.3,346.0 295.5,351.5 293.5,353.5 289.5,355.9 286.4,356.7 282.5,357.5 282.5,363.5 272.5,363.5 272.5,330.5Z M312.5,335.5 322.5,335.5 322.5,369.5 289.5,369.5 289.5,359.7 293.5,358.3 295.9,357.1 298.7,354.7 299.5,353.1 300.3,347.5 302.3,345.2 306.3,343.2 310.3,342.4 312.5,341.2Z M371.5,331.5 371.5,341.4 367.3,341.8 365.3,342.6 362.1,345.0 361.3,347.0 360.5,352.5 358.5,354.5 354.5,356.9 351.4,357.7 347.5,358.5 347.5,365.5 337.5,365.5 337.5,331.5Z M377.0,336.5 387.0,336.5 387.0,370.5 354.0,370.5 354.0,360.7 358.0,359.3 360.4,358.1 363.2,355.7 364.0,354.1 364.8,348.5 366.8,346.2 370.8,344.2 374.8,343.4 377.0,342.2Z M432.5,332.5 432.5,342.4 428.3,342.8 426.3,343.6 423.1,346.0 422.3,348.0 421.5,353.5 419.5,355.5 415.5,357.9 412.4,358.7 408.5,359.5 408.5,366.5 398.5,366.5 398.5,332.5Z M438.5,337.5 449.5,337.5 449.5,371.5 415.5,371.5 415.5,361.7 419.5,360.3 421.9,359.1 424.7,356.7 425.5,355.1 426.3,349.5 428.3,347.2 432.3,345.2 436.3,344.4 438.5,343.2Z M306.5,377.5 306.5,387.4 302.3,387.8 300.3,388.6 297.1,391.0 296.3,393.0 295.5,398.5 293.5,400.5 289.5,402.9 286.4,403.7 282.5,404.5 282.5,411.5 272.5,411.5 272.5,377.5Z M312.5,382.5 322.5,382.5 322.5,416.5 289.5,416.5 289.5,406.7 293.5,405.3 295.9,404.1 298.7,401.7 299.5,400.1 300.3,394.5 302.3,392.2 306.3,390.2 310.3,389.4 312.5,388.2Z M371.5,379.5 371.5,389.4 367.3,389.8 365.3,390.6 362.1,393.0 361.3,395.0 360.5,400.5 358.5,402.5 354.5,404.9 351.4,405.7 347.5,406.5 347.5,413.5 337.5,413.5 337.5,379.5Z M377.0,384.5 387.0,384.5 387.0,418.5 354.0,418.5 354.0,408.7 358.0,407.3 360.4,406.1 363.2,403.7 364.0,402.1 364.8,396.5 366.8,394.2 370.8,392.2 374.8,391.4 377.0,390.2Z M432.5,375.5 432.5,385.4 428.3,385.8 426.3,386.6 423.1,389.0 422.3,391.0 421.5,396.5 419.5,398.5 415.5,400.9 412.4,401.7 408.5,402.5 408.5,409.5 398.5,409.5 398.5,375.5Z M438.5,381.1 449.5,381.1 449.5,415.1 415.5,415.1 415.5,405.3 419.5,403.9 421.9,402.7 424.7,400.3 425.5,398.7 426.3,393.1 428.3,390.8 432.3,388.8 436.3,388.0 438.5,386.8Z" stroke="#ff0000"/>
<g fill="#fff" stroke="#000"><rect x="27.5" y="331.5" width="6" height="6"/><rect x="213.5" y="331.5" width="6" height="6"/><rect x="46.5" y="331.5" width="6" height="6"/><rect x="204.5" y="331.5" width="6" height="6"/><rect x="66.5" y="331.5" width="6" height="6"/><rect x="185.5" y="331.5" width="6" height="6"/><rect x="45.5" y="345.5" width="6" height="6"/><rect x="195.5" y="345.5" width="6" height="6"/><rect x="33.5" y="361.5" width="6" height="6"/><rect x="207.5" y="361.5" width="6" height="6"/><rect x="59.5" y="351.5" width="6" height="6"/><rect x="181.5" y="351.5" width="6" height="6"/><rect x="93.5" y="331.5" width="6" height="6"/><rect x="147.5" y="331.5" width="6" height="6"/><rect x="100.5" y="337.5" width="6" height="6"/><rect x="140.5" y="337.5" width="6" height="6"/><rect x="117.5" y="331.5" width="6" height="6"/><rect x="139.5" y="331.5" width="6" height="6"/><rect x="27.5" y="385.5" width="6" height="6"/><rect x="213.5" y="385.5" width="6" height="6"/><rect x="39.5" y="374.5" width="6" height="6"/><rect x="201.5" y="374.5" width="6" height="6"/><rect x="60.5" y="370.5" width="6" height="6"/><rect x="180.5" y="370.5" width="6" height="6"/><rect x="51.5" y="396.5" width="6" height="6"/><rect x="189.5" y="396.5" width="6" height="6"/><rect x="27.5" y="405.5" width="6" height="6"/><rect x="213.5" y="405.5" width="6" height="6"/><rect x="103.5" y="390.5" width="6" height="6"/><rect x="137.5" y="390.5" width="6" height="6"/><rect x="118.5" y="384.5" width="6" height="6"/><rect x="122.5" y="384.5" width="6" height="6"/><rect x="111.5" y="401.5" width="6" height="6"/><rect x="129.5" y="401.5" width="6" height="6"/><rect x="94.5" y="406.5" width="6" height="6"/><rect x="146.5" y="406.5" width="6" height="6"/><rect x="59.5" y="407.5" width="6" height="6"/><rect x="60.5" y="396.5" width="6" height="6"/><rect x="62.5" y="386.5" width="6" height="6"/><rect x="67.5" y="376.5" width="6" height="6"/><rect x="73.5" y="367.5" width="6" height="6"/><rect x="81.5" y="360.5" width="6" height="6"/><rect x="89.5" y="353.5" width="6" height="6"/><rect x="99.5" y="349.5" width="6" height="6"/><rect x="109.5" y="346.5" width="6" height="6"/><rect x="120.5" y="345.5" width="6" height="6"/><rect x="131.5" y="346.5" width="6" height="6"/><rect x="141.5" y="349.5" width="6" height="6"/><rect x="151.5" y="353.5" width="6" height="6"/><rect x="159.5" y="360.5" width="6" height="6"/><rect x="167.5" y="367.5" width="6" height="6"/><rect x="173.5" y="376.5" width="6" height="6"/><rect x="178.5" y="386.5" width="6" height="6"/><rect x="180.5" y="396.5" width="6" height="6"/><rect x="181.5" y="407.5" width="6" height="6"/></g>
<g fill="#000" stroke="none"><rect x="15" y="320" width="12" height="12"/><rect x="15" y="369" width="12" height="12"/><rect x="15" y="419" width="12" height="12"/><rect x="117" y="320" width="12" height="12"/><rect x="117" y="419" width="12" height="12"/><rect x="219" y="320" width="12" height="12"/><rect x="219" y="369" width="12" height="12"/><rect x="219" y="419" width="12" height="12"/></g>
</g>
<path d="M119.2,370.9 L127,378.7 M127,370.9 L119.2,378.7" stroke="#505050" stroke-width="1.9" fill="none"/><path d="M535.5,79 L540.2,83.6 V86.2 H539.3 L535.5,82.3 L531.7,86.2 H530.9 V83.6Z" fill="#4d4d4d"/>
<path d="M937.4,90 L943.1,96.4 V99.1 H941.3 L937.4,94.4 L933.5,99.1 H931.8 V96.4Z" fill="#4d4d4d"/>
<path d="M933,23 L940,29.5 L933,36Z M940,23 L947,29.5 L940,36Z" fill="#ababab"/>
<path d="M959.9,23.8 L970.6,34.4 M970.6,23.8 L959.9,34.4" stroke="#a8a8a8" stroke-width="2.4" fill="none"/>
<g stroke="#333" stroke-width="1.6" fill="none" stroke-linejoin="round"><path d="M569.3,50.8 L564.8,62.6 L567.8,66.5 H573 L575.9,62.6 L571.4,50.8Z"/><path d="M570.3,51.5 V61" stroke-width="1.4"/><rect x="567.2" y="67.2" width="5.9" height="6" fill="#f2f2f2"/></g>
<circle cx="570.3" cy="62" r="1.4" fill="#333"/>
<path d="M608.6,53.6 L600.5,62.4 L610.4,72.5 L620,63.8" stroke="#333" stroke-width="1.8" fill="none"/>
<path d="M610.5,50 L622.9,62.4 L620.2,65.1 L607.8,52.7Z" fill="#333"/>
<path d="M605.6,63.1 H615.2 L610.4,68.1Z" fill="#ff6600"/>
<path d="M622.9,65 C621.5,67.5 619.7,69.5 619.8,71.3 C620,73 621.5,73.8 622.9,73.7Z" fill="#ff6600"/>
<rect x="639" y="50" width="24" height="24" fill="#333"/><g fill="#f3f3f3"><rect x="645.0" y="51.2" width="4.5" height="4.5"/><rect x="654.2" y="51.2" width="4.4" height="4.5"/><rect x="640.3" y="55.9" width="4.5" height="4.5"/><rect x="649.7" y="55.9" width="4.4" height="4.5"/><rect x="658.8" y="55.9" width="2.9" height="4.5"/><rect x="645.0" y="60.6" width="4.5" height="4.4"/><rect x="654.2" y="60.6" width="4.4" height="4.4"/><rect x="640.3" y="65.1" width="4.5" height="4.4"/><rect x="649.7" y="65.1" width="4.4" height="4.4"/><rect x="658.8" y="65.1" width="2.9" height="4.4"/><rect x="645.0" y="69.6" width="4.5" height="3.1"/><rect x="654.2" y="69.6" width="4.4" height="3.1"/></g>
<path d="M679.2,56.6 C681,51.5 684.5,50.8 686.5,53.5 C689.5,58 691.5,67 694.5,71 C697.5,74.5 701,72 702.8,65.4" stroke="#333" stroke-width="1.7" fill="none"/>
<path d="M731.2,51 H719.8 V74 M742.4,62 V74" stroke="#333" stroke-width="1.6" fill="none"/>
<path d="M719,74 V66.2 L726.3,60.8 L731.5,66.7 L735.5,63.3 L743.2,68 V74Z" fill="#333"/>
<circle cx="727.1" cy="56.7" r="2.2" fill="#333"/>
<text x="734.3" y="60.9" font-family="Liberation Sans,sans-serif" font-size="15.5" fill="#333">?</text>
<rect x="880.7" y="51.5" width="20.7" height="5" fill="#333"/>
<rect x="886.4" y="54.2" width="9.8" height="3" fill="#e9e9e9"/>
<path d="M886.4,56.6 H879.8 V73.2 H902.3 V56.6 H896.2" stroke="#333" stroke-width="1.6" fill="none"/>
<path d="M889.7,59.2 H892.8 V65.6 H896 L891.2,70.8 L886.4,65.6 H889.7Z" fill="#333"/>
<path d="M930.1,52.6 H921.1 V72.8 H941.9 V62" stroke="#333" stroke-width="1.7" fill="none"/>
<ellipse cx="937.9" cy="53.6" rx="5.6" ry="3" stroke="#333" stroke-width="1.3" fill="#fff"/><circle cx="937.9" cy="53.6" r="1.4" fill="#333"/>
<path d="M960.4,51.6 L955.9,56.4 L961.2,61 L966.2,57.3" stroke="#1a1a1a" stroke-width="1.3" fill="none"/><path d="M961.4,49.8 L967.7,56.4 L966,58.1 L959.8,51.4Z" fill="#1a1a1a"/>
<path d="M959,56.4 H963.7 L961.4,58.6Z M968.5,58 C967.4,59.3 966.9,60.3 967,61 C967.2,62 968,62.7 968.8,62.7Z" fill="#ff7a1a"/>
<path d="M961.2,63.9 L962.5,65 L964.9,61.3 M961.2,68.2 L962.6,69.4 L964.9,65.3" stroke="#1a1a1a" stroke-width="1.3" fill="none"/><path d="M966.2,64.4 H975" stroke="#1a1a1a" stroke-width="1.2"/><path d="M966.2,68 H975" stroke="#333" stroke-width="1.7"/>
<path d="M566,102.6 H577 L571.5,96.3Z M566.5,548.6 H578 L572.2,542.5Z M733.8,502.5 H745.2 L739.5,508.8Z M878,582 H890 L884,588.2Z" fill="#000"/>
<rect x="563.8" y="127.8" width="22.5" height="22.5" stroke="#333" stroke-width="1.6" fill="#f6f6f6"/><path d="M566,130 L584,148 M584,130 L566,148" stroke="#333" stroke-width="1.4"/>
<rect x="603" y="127" width="24" height="24" fill="#333"/>
<defs><linearGradient id="g1" x1="0" y1="0" x2="1" y2="1"><stop offset="0.1" stop-color="#fff"/><stop offset="0.9" stop-color="#333"/></linearGradient><linearGradient id="g2" x1="0" y1="1" x2="1" y2="0"><stop offset="0.2" stop-color="#333"/><stop offset="0.8" stop-color="#ff0000"/></linearGradient></defs>
<rect x="643" y="127" width="24" height="24" fill="url(#g1)"/>
<rect x="683.8" y="127.8" width="22.5" height="22.5" stroke="#333" stroke-width="1.6" fill="#fff"/><path d="M687.9,128.9 l3.3,4.7 l-3.3,4.7 l-3.3,-4.7Z M687.9,139.6 l3.3,4.7 l-3.3,4.7 l-3.3,-4.7Z M695.0,128.9 l3.3,4.7 l-3.3,4.7 l-3.3,-4.7Z M695.0,139.6 l3.3,4.7 l-3.3,4.7 l-3.3,-4.7Z M702.1,128.9 l3.3,4.7 l-3.3,4.7 l-3.3,-4.7Z M702.1,139.6 l3.3,4.7 l-3.3,4.7 l-3.3,-4.7Z" fill="#333"/>
<clipPath id="csw"><rect x="723" y="127" width="24" height="24"/></clipPath>
<rect x="723" y="127" width="24" height="24" fill="#333"/>
<g stroke="#f4f4f4" stroke-width="1.6" fill="none" clip-path="url(#csw)"><path d="M726.5,133 C726.6,130 727.8,128.2 730,126.8"/><path d="M741.3,127.3 C743.5,129.4 744.2,132 743.6,134 C742.8,137 740,138.9 737.2,138.7 C734.5,138.5 732.4,136 732.3,133 C732.2,130.5 734.5,128.8 737.4,128.9 C739.8,129 741,131 740.5,133.2 C740,135 738.2,135.8 736.8,135.2 C735.4,134.6 735.3,133 736.2,132.5"/><path d="M722.8,134.4 C726,134.2 729.5,135.5 731.5,138.5 C733.3,141.5 733.2,145 731,147.5 C729,149.5 725.5,149.8 722.8,147.6"/><path d="M722.8,140.8 C724.5,139.3 727.2,139.2 729,141 C730.5,142.8 730.3,145.2 728.5,146.2 C726.8,147.2 724.8,146.3 724.5,144.5 C724.3,143 725.5,142 727,142.3 C727.8,142.6 728,143.4 727.6,143.8"/><path d="M735.8,151.2 C735.8,146.5 738.5,142.8 742,141.5 C743.8,140.9 745.5,140.8 747.2,140.8"/><path d="M741.9,151.2 C741.9,148.5 743,146.5 744.8,145.7 C745.6,145.4 746.3,145.3 747.2,145.3"/><path d="M744.2,151.2 C744,149.8 744.8,149 745.8,149.2 C746.4,149.4 746.6,149.9 746.8,150.3"/></g>
<rect x="763" y="127" width="12" height="24" fill="#333"/><rect x="774.8" y="127.8" width="11.5" height="22.5" stroke="#333" stroke-width="1.6" fill="#fff"/><path d="M784.4,154.8 H791 V148Z" fill="#000"/>
<path d="M686.4,219.3 L686.8,216.4 L700.9,202.4 L703.3,204.8 L689.3,218.9Z" fill="#fff" stroke="#333" stroke-width="1.25" stroke-linejoin="round"/><path d="M686.9,218.8 L687.4,216.4 L692.0,211.8 L693.9,213.7 L689.3,218.3Z" fill="#ff6600"/><path d="M697.6,201.0 L699.4,199.2 L706.5,206.3 L704.7,208.1Z" fill="#333"/><path d="M700.9,201.1 L704.8,197.2 L705.8,197.3 L708.4,199.9 L708.5,200.9 L704.6,204.8Z" fill="#333" stroke="#333" stroke-width="1.5" stroke-linejoin="round"/>
<path d="M995.6,80.9 L995.9,78.5 L1007.7,66.7 L1009.8,68.8 L998.0,80.6Z" fill="#fff" stroke="#333" stroke-width="1.14" stroke-linejoin="round"/><path d="M996.0,80.5 L996.4,78.4 L1000.3,74.6 L1001.9,76.2 L998.1,80.1Z" fill="#ff6600"/><path d="M1005.0,65.6 L1006.5,64.1 L1012.4,70.0 L1010.9,71.5Z" fill="#333"/><path d="M1007.8,65.7 L1011.1,62.4 L1011.8,62.5 L1014.0,64.7 L1014.1,65.4 L1010.8,68.7Z" fill="#333" stroke="#333" stroke-width="1.5" stroke-linejoin="round"/>
<g fill="#333"><rect x="733" y="197.4" width="10.6" height="3"/><rect x="733" y="206.4" width="4.2" height="3"/><rect x="733" y="215.6" width="7.1" height="3"/></g>
<rect x="751" y="197.4" width="6" height="3" fill="#ff1414"/><rect x="745" y="206.4" width="12" height="3" fill="#00a651"/><rect x="748.2" y="215.6" width="8.8" height="3" fill="#1ba1e2"/>
<g stroke="#333" stroke-width="1.3" fill="#fff"><rect x="745.6" y="196.3" width="3.2" height="5.2"/><rect x="739.6" y="205.3" width="3.2" height="5.2"/><rect x="742.7" y="214.5" width="3.2" height="5.2"/></g>
<rect x="774.8" y="196.6" width="22.5" height="22.6" stroke="#444" stroke-width="1.6" fill="url(#g2)"/>
<rect x="816" y="198.4" width="20.7" height="20.7" stroke="#444" stroke-width="1.7" fill="#fff"/>
<rect x="818.0" y="200.4" width="4.6" height="4.6" fill="#333"/>
<rect x="824.0" y="200.4" width="4.6" height="4.6" fill="#1ba1e2"/>
<rect x="830.0" y="200.4" width="4.6" height="4.6" fill="#00a03c"/>
<rect x="818.0" y="206.4" width="4.6" height="4.6" fill="#00a03c"/>
<rect x="824.0" y="206.4" width="4.6" height="4.6" fill="#1ba1e2"/>
<rect x="830.0" y="206.4" width="4.6" height="4.6" fill="#ff6600"/>
<rect x="818.0" y="212.5" width="4.6" height="4.6" fill="#ff6600"/>
<rect x="824.0" y="212.5" width="4.6" height="4.6" fill="#333"/>
<rect x="830.0" y="212.5" width="4.6" height="4.6" fill="#ff1010"/>
<rect x="825.5" y="214" width="1.6" height="1.6" fill="#fff"/>
<g fill="#333"><rect x="862" y="205" width="6" height="6"/><rect x="871" y="205" width="6" height="6"/><rect x="880" y="205" width="6" height="6"/></g>
<g fill="#b4b4b4"><rect x="983" y="18" width="2" height="2"/><rect x="983" y="24" width="2" height="2"/><rect x="989" y="18" width="2" height="2"/><rect x="989" y="24" width="2" height="2"/><rect x="995" y="18" width="2" height="2"/><rect x="995" y="24" width="2" height="2"/><rect x="1001" y="18" width="2" height="2"/><rect x="1001" y="24" width="2" height="2"/><rect x="1007" y="18" width="2" height="2"/><rect x="1007" y="24" width="2" height="2"/><rect x="1013" y="18" width="2" height="2"/><rect x="1013" y="24" width="2" height="2"/><rect x="1019" y="18" width="2" height="2"/><rect x="1019" y="24" width="2" height="2"/><rect x="986" y="21" width="2" height="2"/><rect x="992" y="21" width="2" height="2"/><rect x="998" y="21" width="2" height="2"/><rect x="1004" y="21" width="2" height="2"/><rect x="1010" y="21" width="2" height="2"/><rect x="1016" y="21" width="2" height="2"/><rect x="1022" y="21" width="2" height="2"/></g>
<path d="M1002,35.5 L1008.4,41.2 L1002,47Z" fill="#000"/>
<path d="M1004.5,97.5 L1020,113 V122 L1004.5,106.5 L989,122 V113Z" fill="#d2d2d2"/>
<path d="M984.5,139.5 L1025.5,180.5 M1025.5,139.5 L984.5,180.5" stroke="#444" stroke-width="1" fill="none"/>
<path d="M964.6,414.7 A7.8,7.8 0 0 1 965.6,430.2" stroke="#333" stroke-width="1.5" fill="none"/><path d="M961.6,429.5 L958.6,427.3 M956.4,424.6 L955.7,421.6" stroke="#333" stroke-width="1.5" fill="none"/><path d="M960.2,414.6 L964.9,411 V418Z" fill="#333"/>
<path d="M955.8,580 V601" stroke="#1ba1e2" stroke-width="1.6" stroke-dasharray="1.6,1.2"/><rect x="958.7" y="584.8" width="15.4" height="4.3" stroke="#333" stroke-width="1.3" fill="#e6e6e6"/><rect x="958.7" y="592.1" width="10.5" height="3.4" stroke="#333" stroke-width="1.3" fill="#e6e6e6"/>
</svg>
<div class="a" style="left:826px;top:220px;width:201px;height:113px;background:#fff;border:1px solid #a0a0a0;box-shadow:1px 2px 3px rgba(0,0,0,.6)"></div>
<div class="a" style="left:830px;top:224px;width:14px;height:14px;background:#000"></div>
<div class="t tt" style="left:847px;top:227.1px;font-size:16px;color:#575757">ENGRAVE (fill or outline)</div>
<div class="t tt" style="left:847px;top:245.8px;font-size:16px;color:#575757">R: 0</div>
<div class="t tt" style="left:847px;top:265.8px;font-size:16px;color:#575757">G: 0</div>
<div class="t tt" style="left:847px;top:285.7px;font-size:16px;color:#575757">B: 0</div>
<div class="t tt" style="left:847px;top:316.7px;font-size:16px;color:#575757">#000000</div>
</body></html>
